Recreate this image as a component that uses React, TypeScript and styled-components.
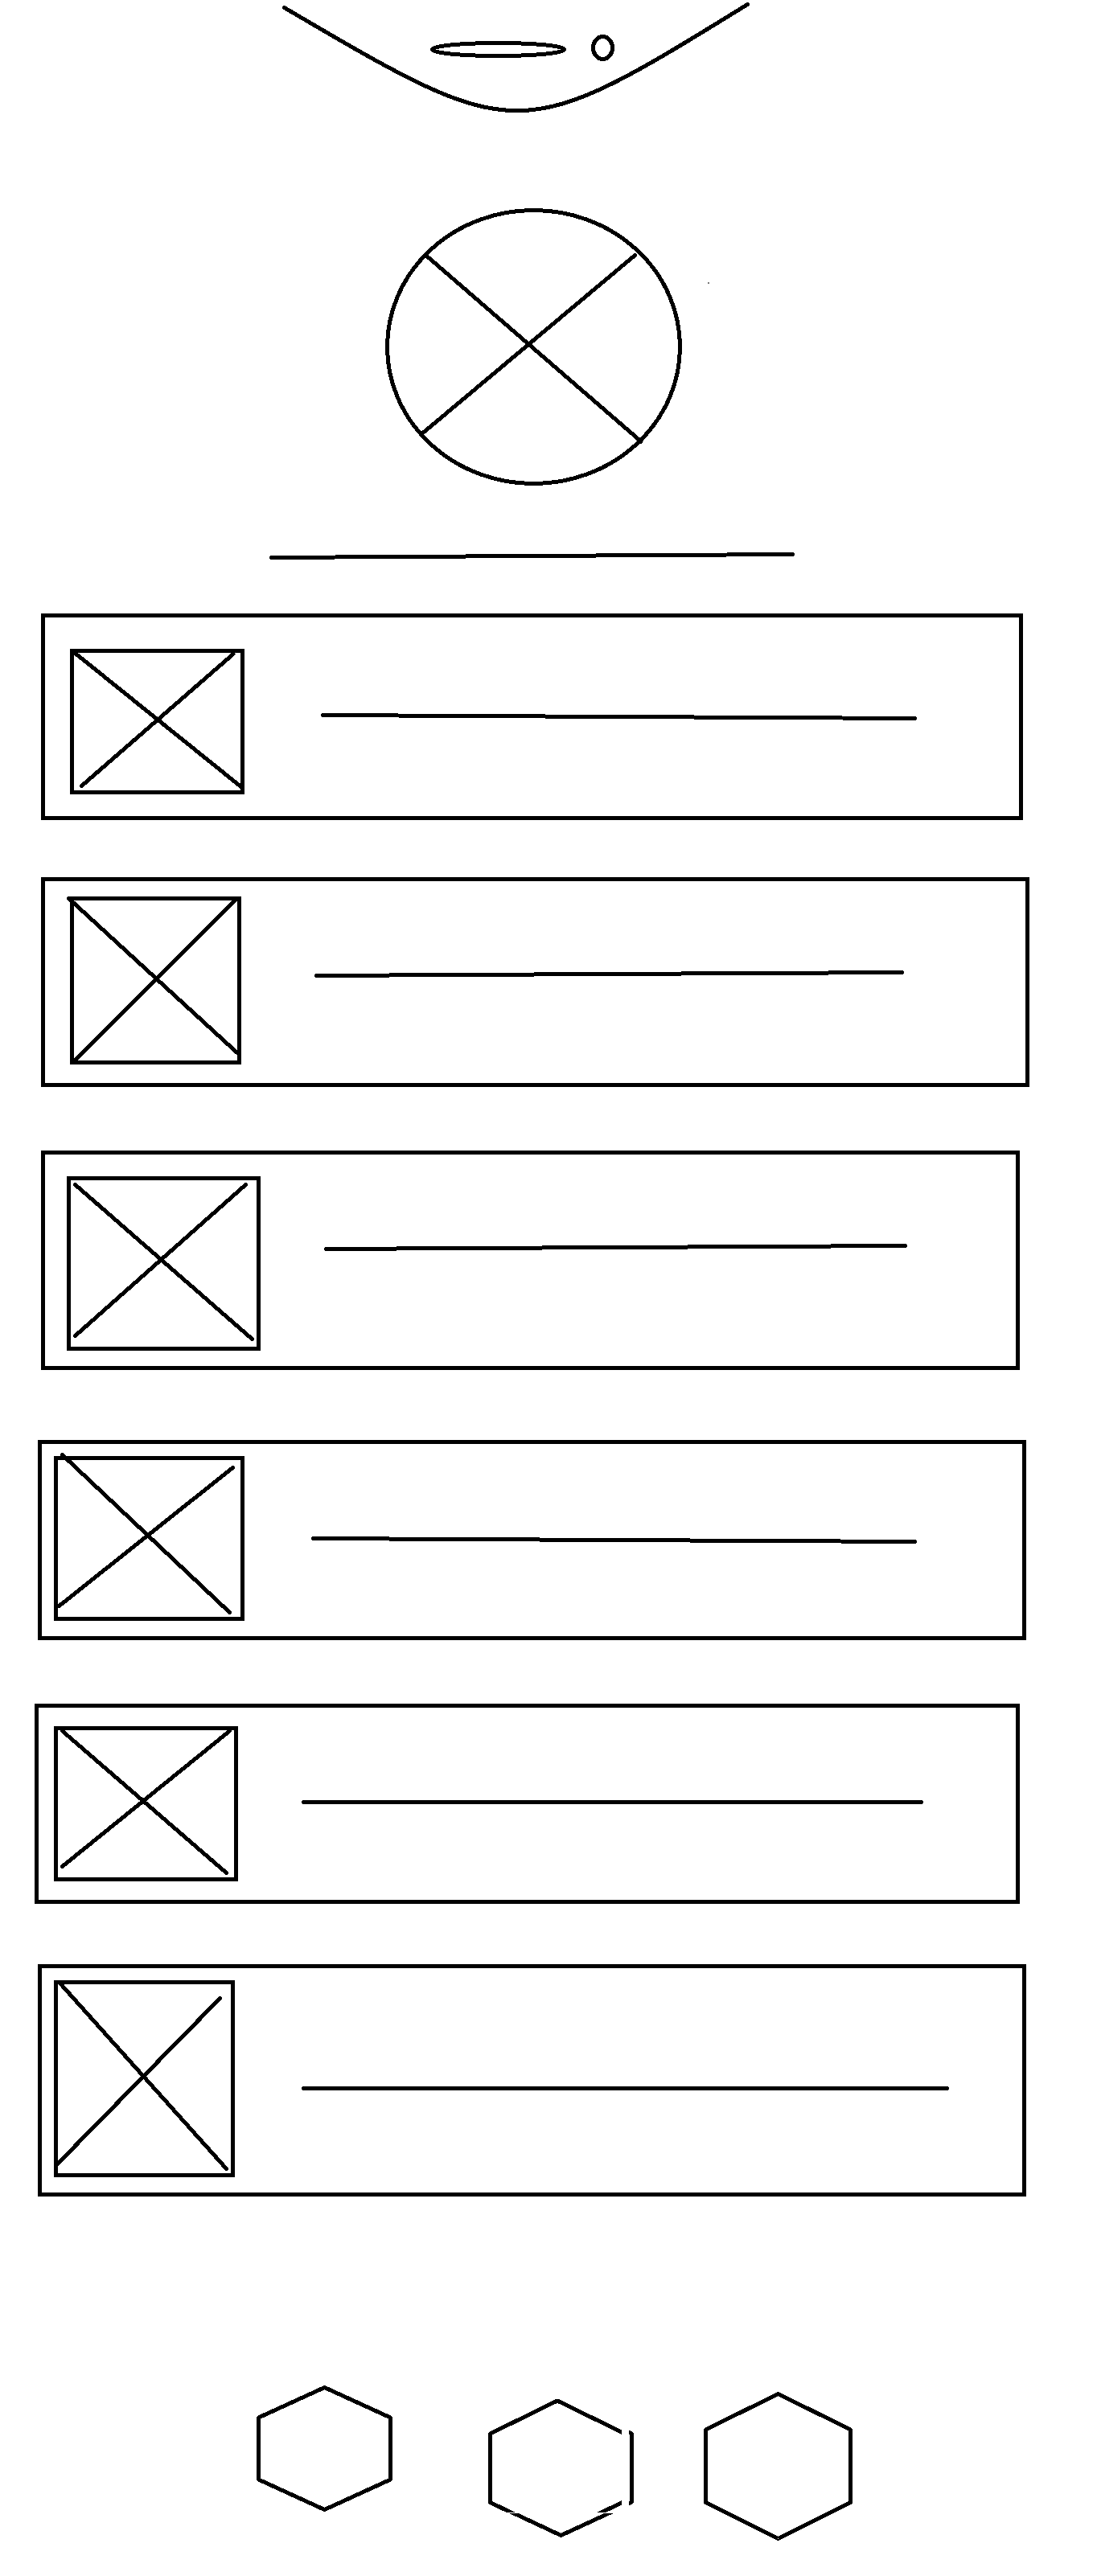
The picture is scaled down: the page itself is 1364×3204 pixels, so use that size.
import React from "react";
import styled, { createGlobalStyle } from "styled-components";

const INK = "#000";
const STROKE = 5;

const GlobalStyle = createGlobalStyle`
  *, *::before, *::after { box-sizing: border-box; }
  body {
    margin: 0;
    background: #fff;
    color: ${INK};
    font-family: "Liberation Sans", Arial, sans-serif;
  }
`;

const Page = styled.main`
  display: flex;
  flex-direction: column;
  width: 100%;
  padding-bottom: 44px;
`;

const Drawing = styled.svg`
  display: block;
  flex: none;
  overflow: visible;
  fill: none;
  stroke: ${INK};
  stroke-width: ${STROKE}px;
  stroke-linecap: round;
  stroke-linejoin: round;
  shape-rendering: crispEdges;
`;

const Notch = styled.header`
  display: flex;
  justify-content: center;
  padding-right: 82px;
`;

const Profile = styled.section`
  display: flex;
  justify-content: center;
  padding-top: 119px;
`;

const Heading = styled.section`
  display: flex;
  justify-content: center;
  padding: 82px 40px 0 0;
`;

const List = styled.ul`
  display: flex;
  flex-direction: column;
  margin: 0;
  padding: 66px 0 0;
  list-style: none;
`;

const Card = styled.li<{ $margin: string; $padding: string; $gap: number }>`
  display: flex;
  align-items: stretch;
  gap: ${(p) => p.$gap}px;
  margin: ${(p) => p.$margin};
  padding: ${(p) => p.$padding};
  border: ${STROKE}px solid ${INK};
`;

const Thumb = styled.div<{ $w: number; $h: number }>`
  flex: none;
  width: ${(p) => p.$w}px;
  height: ${(p) => p.$h}px;
  border: ${STROKE}px solid ${INK};
`;

const Caption = styled(Drawing)`
  flex: 1 1 0;
  min-width: 0;

  line {
    vector-effect: non-scaling-stroke;
  }
`;

const Footer = styled.footer`
  display: flex;
  justify-content: center;
  align-items: flex-start;
  padding: 235px 0 0 16px;
`;

const Badge = styled(Drawing)<{ $top?: number; $left?: number }>`
  margin: ${(p) => p.$top ?? 0}px 0 0 ${(p) => p.$left ?? 0}px;
`;

type Row = {
  margin: string;
  padding: string;
  gap: number;
  thumb: [number, number];
  cross: string;
  length: number;
  from: number;
  to: number;
};

// Cross paths and caption heights are measured from the thumbnail's outer corner.
const rows: Row[] = [
  {
    margin: "0 92px 0 51px",
    padding: "39px 127px 27px 31px",
    gap: 95,
    thumb: [217, 181],
    cross: "M6.5 5.5L212 171M203 6.5L14.5 170.5",
    length: 741,
    from: 82.5,
    to: 86.5,
  },
  {
    margin: "71px 84px 0 51px",
    padding: "19px 151px 23px 31px",
    gap: 91,
    thumb: [213, 209],
    cross: "M-1.5 2.5L208 194.5M206 4L6 204",
    length: 733,
    from: 98.5,
    to: 94.5,
  },
  {
    margin: "79px 96px 0 51px",
    padding: "27px 135px 19px 27px",
    gap: 79,
    thumb: [241, 217],
    cross: "M10.5 10.5L230.5 202.5M222.5 10.5L10.5 198.5",
    length: 725,
    from: 90.5,
    to: 86.5,
  },
  {
    margin: "87px 88px 0 47px",
    padding: "15px 131px 19px 15px",
    gap: 83,
    thumb: [237, 205],
    cross: "M10.5 -1.5L218.5 194.5M222.5 14.5L6.5 186.5",
    length: 753,
    from: 102.5,
    to: 106.5,
  },
  {
    margin: "79px 96px 0 43px",
    padding: "23px 115px 23px 19px",
    gap: 79,
    thumb: [229, 193],
    cross: "M10.5 6L214.5 182.5M218.5 6L10.5 174.5",
    length: 773,
    from: 94.5,
    to: 94.5,
  },
  {
    margin: "75px 88px 0 47px",
    padding: "15px 91px 19px 15px",
    gap: 83,
    thumb: [225, 245],
    cross: "M6.5 2.5L214.5 234.5M206.5 22.5L4 229",
    length: 805,
    from: 134.5,
    to: 134.5,
  },
];

function MediaCard({ row }: { row: Row }) {
  const [w, h] = row.thumb;
  return (
    <Card $margin={row.margin} $padding={row.padding} $gap={row.gap}>
      <Thumb $w={w} $h={h}>
        <Drawing
          width="100%"
          height="100%"
          viewBox={`${STROKE} ${STROKE} ${w - 2 * STROKE} ${h - 2 * STROKE}`}
          aria-hidden="true"
        >
          <path d={row.cross} />
        </Drawing>
      </Thumb>
      <Caption
        height={h}
        viewBox={`0 0 ${row.length} ${h}`}
        preserveAspectRatio="none"
        aria-hidden="true"
      >
        <line x1={2.5} y1={row.from} x2={row.length - 2.5} y2={row.to} />
      </Caption>
    </Card>
  );
}

export default function App() {
  return (
    <>
      <GlobalStyle />
      <Page>
        <Notch>
          <Drawing width="582" height="140" viewBox="350 0 582 140" aria-hidden="true">
            <path d="M353.5 9.5C645 181 645 181 929.5 5.5" />
            <ellipse cx="619.5" cy="61.5" rx="82" ry="8" />
            <ellipse cx="749.5" cy="59.5" rx="12" ry="14" />
          </Drawing>
        </Notch>

        <Profile>
          <Drawing width="406" height="345" viewBox="479 259 406 345" aria-hidden="true">
            <ellipse cx="663.5" cy="431.5" rx="182" ry="170" />
            <path d="M529.5 317.5L797 549M789.5 317.5L524 540" />
            <rect x="880" y="351" width="2" height="2" fill="#777" stroke="none" />
          </Drawing>
        </Profile>

        <Heading>
          <Drawing width="654" height="11" viewBox="335 686 654 11" aria-hidden="true">
            <line x1="337.5" y1="693.5" x2="985.5" y2="689.5" />
          </Drawing>
        </Heading>

        <List>
          {rows.map((row, i) => (
            <MediaCard key={i} row={row} />
          ))}
        </List>

        <Footer>
          <Badge width="169" height="158" viewBox="319 2967 169 158" aria-hidden="true">
            <path d="M321.5 3007L403.5 2969.5L485.5 3007V3084L403.5 3121.5L321.5 3084Z" />
          </Badge>
          <Badge
            $top={16}
            $left={119}
            width="181"
            height="173"
            viewBox="607 2983 181 173"
            aria-hidden="true"
          >
            <clipPath id="badge-body">
              <rect x="600" y="2975" width="173" height="150" />
            </clipPath>
            <clipPath id="badge-side">
              <rect x="782" y="2975" width="12" height="150" />
            </clipPath>
            <clipPath id="badge-foot">
              <rect x="600" y="3126" width="190" height="40" />
            </clipPath>
            <path
              clipPath="url(#badge-body)"
              d="M650 3132L609.5 3112.5V3027L693 2986L783 3030M783 3108L733 3132"
            />
            <path clipPath="url(#badge-side)" d="M780 3024L785.5 3027V3112L780 3115" />
            <path clipPath="url(#badge-foot)" d="M625 3119.5L697.5 3153.5L772 3119" />
          </Badge>
          <Badge
            $top={8}
            $left={87}
            width="186"
            height="185"
            viewBox="875 2975 186 185"
            aria-hidden="true"
          >
            <path d="M877.5 3022L967.5 2977.5L1057.5 3022V3112.5L967.5 3157.5L877.5 3112.5Z" />
          </Badge>
        </Footer>
      </Page>
    </>
  );
}
